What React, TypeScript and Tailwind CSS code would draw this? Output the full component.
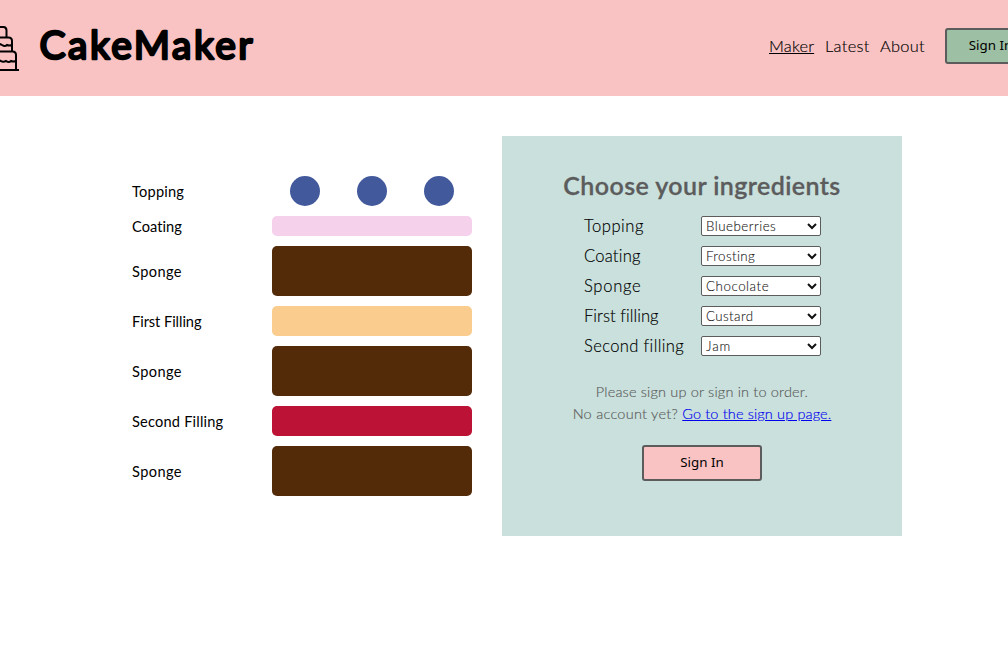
import React, { useState } from 'react';

const layers = [
  { label: 'Coating', size: 'h-5', color: 'bg-[#f6d1eb]', track: 'tracking-[0.05px]' },
  { label: 'Sponge', size: 'h-[50px]', color: 'bg-[#532b09]', track: 'tracking-[0.4px]' },
  { label: 'First Filling', size: 'h-[30px]', color: 'bg-[#facc8e]', track: 'tracking-[-0.05px]' },
  { label: 'Sponge', size: 'h-[50px]', color: 'bg-[#532b09]', track: 'tracking-[0.4px]' },
  { label: 'Second Filling', size: 'h-[30px]', color: 'bg-[#bb1235]', track: 'tracking-[0.2px]' },
  { label: 'Sponge', size: 'h-[50px]', color: 'bg-[#532b09]', track: 'tracking-[0.4px]' },
];

const fields = [
  { label: 'Topping', options: ['Blueberries', 'Strawberries'], track: 'tracking-[0.5px]', optTrack: 'tracking-[0.5px]' },
  { label: 'Coating', options: ['Frosting', 'Marzipan'], track: 'tracking-[0.2px]', optTrack: 'tracking-[0.4px]' },
  { label: 'Sponge', options: ['Chocolate', 'Vanilla'], track: 'tracking-[0.7px]', optTrack: 'tracking-[0.55px]' },
  { label: 'First filling', options: ['Custard', 'Jam'], track: 'tracking-[0.05px]', optTrack: 'tracking-[0.4px]' },
  { label: 'Second filling', options: ['Jam', 'Custard'], track: 'tracking-[0.35px]', optTrack: 'tracking-[0.9px]' },
];

function CakeIcon() {
  return (
    <svg className="-ml-0.5 h-12 w-12 shrink-0" viewBox="0 0 48 48" fill="none" stroke="#000" strokeWidth="2">
      <path d="M24 0v3M13 13V6.500q0-3.500 3.500-3.500h16q3 0 3 3.500v7" />
      <path d="M7 27V17q0-3.500 3.500-3.500h27q3.500 0 3.500 3.500v10M7 21q3 2 6 0q3-2 6 0q3 2 6 0q3-2 6 0q3 2 5 0q2 1 5 0" />
      <path d="M3 46V31q0-3.500 3.500-3.500h35q3.500 0 3.500 3.500v15M3 36q3 3 7 0q3 3 7 0q3 3 7 0q3-1 5 .5q3 2 6 .5q3 2 5 0q2 1 5 0M0 46h48" />
    </svg>
  );
}

function SignIn({ tone }: { tone: string }) {
  return (
    <button className={`h-9 shrink-0 rounded-[3px] border-2 border-[#5c5c5c] pb-0.5 font-['Noto_Sans',sans-serif] text-[13.333px] leading-4 text-black ${tone}`}>
      Sign In
    </button>
  );
}

function Field({ field }: { field: (typeof fields)[number] }) {
  const [value, setValue] = useState(field.options[0]);
  return (
    <label className="flex h-5 items-center justify-between">
      <span className={`whitespace-nowrap pl-px text-[16.6px] font-light leading-5 [-webkit-text-stroke:0.15px_#000] ${field.track}`}>{field.label}</span>
      <select
        value={value}
        onChange={(e) => setValue(e.target.value)}
        className={`h-5 w-[120px] rounded-[2px] border border-[#5c5c5c] bg-white pr-px text-[13.333px] font-light text-[#111] [-webkit-text-stroke:0.1px_#222] ${field.optTrack}`}
      >
        {field.options.map((o) => (
          <option key={o}>{o}</option>
        ))}
      </select>
    </label>
  );
}

export default function App() {
  return (
    <div className="h-[672px] w-full overflow-hidden bg-white font-['Lato',sans-serif] text-black">
      <header className="flex h-24 justify-center overflow-hidden bg-[#fac3c3]">
        <div className="flex w-[1062px] shrink-0 items-center justify-between">
          <div className="flex items-center gap-[18px]">
            <CakeIcon />
            <h1>
              <svg width="222" height="56" viewBox="0 0 222 56" className="block" aria-label="CakeMaker">
                <text
                  x="2.500"
                  y="38.500"
                  textLength="213"
                  className="fill-black stroke-black stroke-[2.500px] font-['Lato',sans-serif] text-[39px] font-normal [stroke-linejoin:round]"
                >
                  CakeMaker
                </text>
              </svg>
            </h1>
          </div>
          <div className="flex items-center gap-5 pb-1">
            <nav className="flex gap-2.5 text-[16.4px] font-light leading-6 [-webkit-text-stroke:0.15px_#000]">
              <a className="w-[46px] whitespace-nowrap tracking-[0.2px] underline">Maker</a>
              <a className="w-[45px] whitespace-nowrap tracking-[0.3px]">Latest</a>
              <a className="w-[45px] whitespace-nowrap tracking-[0.3px]">About</a>
            </nav>
            <SignIn tone="w-[91px] -mr-px bg-[#9dbfa3]" />
          </div>
        </div>
      </header>
      <main className="flex gap-[30px] pl-[132px] pt-10">
        <section className="flex w-[340px] flex-col gap-2.5 pt-10 text-[14.6px] leading-[18px]">
          <div className="flex h-[30px] items-center">
            <span className="w-[140px] pt-0.5 tracking-[0.2px]">Topping</span>
            <div className="flex w-[200px] justify-around">
              <i className="size-[30px] rounded-full bg-[#42599c]" />
              <i className="size-[30px] rounded-full bg-[#42599c]" />
              <i className="size-[30px] rounded-full bg-[#42599c]" />
            </div>
          </div>
          {layers.map((l, i) => (
            <div key={i} className="flex items-center">
              <span className={`w-[140px] pt-0.5 ${l.track}`}>{l.label}</span>
              <div className={`w-[200px] rounded-[5px] ${l.size} ${l.color}`} />
            </div>
          ))}
        </section>
        <section className="flex h-[400px] w-[400px] flex-col items-center bg-[#c9e0dc] pt-[33px]">
          <h2 className="whitespace-nowrap text-[25px] font-semibold leading-8 tracking-[0.42px] text-[#5c5c5c] [-webkit-text-stroke:0.3px_#5c5c5c]">Choose your ingredients</h2>
          <div className="mt-[15px] flex w-[238px] flex-col gap-2.5">
            {fields.map((f) => (
              <Field key={f.label} field={f} />
            ))}
          </div>
          <div className="mt-[25px] text-center text-[14.5px] font-light leading-[22px] text-[#5c5c5c] [-webkit-text-stroke:0.15px]">
            <p className="whitespace-nowrap tracking-[0.17px]">Please sign up or sign in to order.</p>
            <p className="whitespace-nowrap tracking-[0.26px]">
              No account yet? <a className="tracking-[0.14px] text-[#0000ee] underline">Go to the sign up page.</a>
            </p>
          </div>
          <div className="mt-5">
            <SignIn tone="w-[120px] bg-[#fac3c3]" />
          </div>
        </section>
      </main>
    </div>
  );
}
